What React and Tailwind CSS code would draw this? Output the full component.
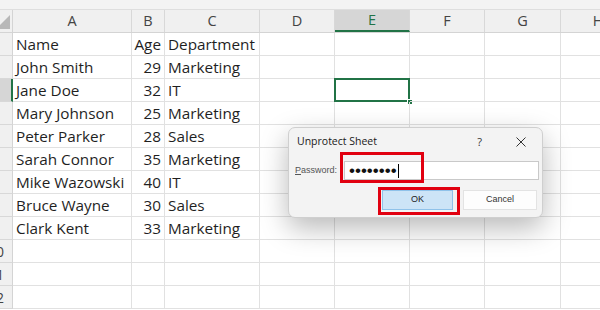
import React from "react";

const cols = [
  { key: "A", w: "w-[119px]" },
  { key: "B", w: "w-[33px]" },
  { key: "C", w: "w-[95px]" },
  { key: "D", w: "w-[75px]" },
  { key: "E", w: "w-[75px]" },
  { key: "F", w: "w-[75px]" },
  { key: "G", w: "w-[76px]" },
  { key: "H", w: "w-[75px]" },
];

const data = [
  ["Name", "Age", "Department"],
  ["John Smith", "29", "Marketing"],
  ["Jane Doe", "32", "IT"],
  ["Mary Johnson", "25", "Marketing"],
  ["Peter Parker", "28", "Sales"],
  ["Sarah Connor", "35", "Marketing"],
  ["Mike Wazowski", "40", "IT"],
  ["Bruce Wayne", "30", "Sales"],
  ["Clark Kent", "33", "Marketing"],
  ["", "", ""],
  ["", "", ""],
  ["", "", ""],
];

const cellFont = { fontFamily: '"Open Sans", "Noto Sans", sans-serif' };

export default function App() {
  return (
    <div className="relative w-[600px] h-[310px] overflow-hidden bg-white" style={cellFont}>
      {/* top strip */}
      <div className="h-[10px] bg-[#f3f3f3] border-b border-[#dedede]" />
      {/* column header row */}
      <div className="flex h-[23px] bg-[#f0f0f0] border-b border-[#d4d4d4] whitespace-nowrap">
        <div className="relative w-[13px] shrink-0 border-r border-[#d4d4d4] overflow-hidden">
          <svg className="absolute left-0 top-[3px]" width="13" height="18" viewBox="0 0 13 18">
            <polygon points="10,2 10,16 -4,16" fill="#b8b8b8" />
          </svg>
        </div>
        {cols.map((c) => (
          <div
            key={c.key}
            className={`${c.w} shrink-0 flex items-center justify-center text-[14.5px] border-r border-[#d8d8d8] ${
              c.key === "E" ? "bg-[#d6d6d6] text-[#217346] border-b-2 border-b-[#217346]" : "text-[#444]"
            }`}
          >
            {c.key}
          </div>
        ))}
      </div>
      {/* data rows */}
      {data.map((r, i) => {
        const rowNum = i + 1;
        const active = rowNum === 3;
        return (
          <div key={i} className="flex h-[23px] whitespace-nowrap">
            <div
              className={`relative w-[13px] shrink-0 overflow-hidden border-b border-[#d8d8d8] ${
                active ? "bg-[#d6d6d6] border-r-2 border-r-[#217346]" : "bg-[#f0f0f0] border-r border-r-[#d4d4d4]"
              }`}
            >
              {rowNum >= 10 && (
                <div className="absolute left-[-4px] top-0 h-full flex items-center text-[14px] text-[#444]">
                  {String(rowNum).slice(1)}
                </div>
              )}
            </div>
            {cols.map((c, j) => {
              const txt = j < 3 ? r[j] : "";
              const isSel = c.key === "E" && active;
              return (
                <div
                  key={c.key}
                  className={`relative ${c.w} shrink-0 flex items-center border-r border-b border-[#e1e1e1] text-[15.3px] text-[#1f1f1f] ${
                    j === 1 ? "justify-end pr-[3px]" : "pl-[3px]"
                  }`}
                >
                  {txt}
                  {isSel && (
                    <>
                      <div className="absolute left-[-1px] top-[-1px] right-[-1px] bottom-[-1px] border-2 border-[#217346]" />
                      <div className="absolute right-[-4px] bottom-[-4px] w-[6px] h-[6px] bg-[#217346] border border-white" />
                    </>
                  )}
                </div>
              );
            })}
          </div>
        );
      })}

      {/* dialog */}
      <div className="absolute left-[288px] top-[127px] w-[255px] h-[91px] rounded-[7px] bg-[#f3f3f3] border border-[#cfcfcf] shadow-[0_10px_28px_rgba(0,0,0,0.28)]">
        <div className="flex items-center h-[27px] pl-[8px] pt-[1px]">
          <span className="text-[10.5px] text-[#1a1a1a]" style={{ fontFamily: '"Open Sans", sans-serif' }}>
            Unprotect Sheet
          </span>
          <span className="ml-auto mr-[34px] text-[11px] text-[#333]" style={{ fontFamily: '"Open Sans", sans-serif' }}>
            ?
          </span>
          <svg className="mr-[16px]" width="10" height="10" viewBox="0 0 10 10">
            <path d="M0.5 0.5 L9.5 9.5 M9.5 0.5 L0.5 9.5" stroke="#333" strokeWidth="1" />
          </svg>
        </div>
        <div className="flex items-center mt-[6px] pl-[6px]">
          <span className="text-[9px] text-[#555] w-[49px]" style={{ fontFamily: '"Liberation Sans", Arial, sans-serif' }}>
            <span className="underline">P</span>assword:
          </span>
          <div className="flex items-center w-[195px] h-[19px] bg-white border border-[#c9c9c9] pl-[4px]">
            <span className="text-[17px] leading-none text-[#111]" style={{ fontFamily: '"Liberation Sans", Arial, sans-serif' }}>
              ••••••••
            </span>
            <span className="w-[1px] h-[14px] bg-black ml-[1px]" />
          </div>
        </div>
        <div className="flex mt-[10px] pl-[93px] gap-[10px]">
          <div
            className="w-[71px] h-[20px] flex items-center justify-center bg-[#cce4f7] border border-[#8fc2ea] text-[9px] text-[#222]"
            style={{ fontFamily: '"Liberation Sans", Arial, sans-serif' }}
          >
            OK
          </div>
          <div
            className="w-[74px] h-[20px] flex items-center justify-center bg-[#fdfdfd] border border-[#e3e3e3] text-[9px] text-[#333]"
            style={{ fontFamily: '"Liberation Sans", Arial, sans-serif' }}
          >
            Cancel
          </div>
        </div>
      </div>

      {/* red highlight boxes */}
      <div className="absolute left-[340px] top-[152px] w-[84px] h-[31px] border-[3px] border-[#e10010]" />
      <div className="absolute left-[378px] top-[187px] w-[82px] h-[28px] border-[3px] border-[#e10010]" />
    </div>
  );
}
